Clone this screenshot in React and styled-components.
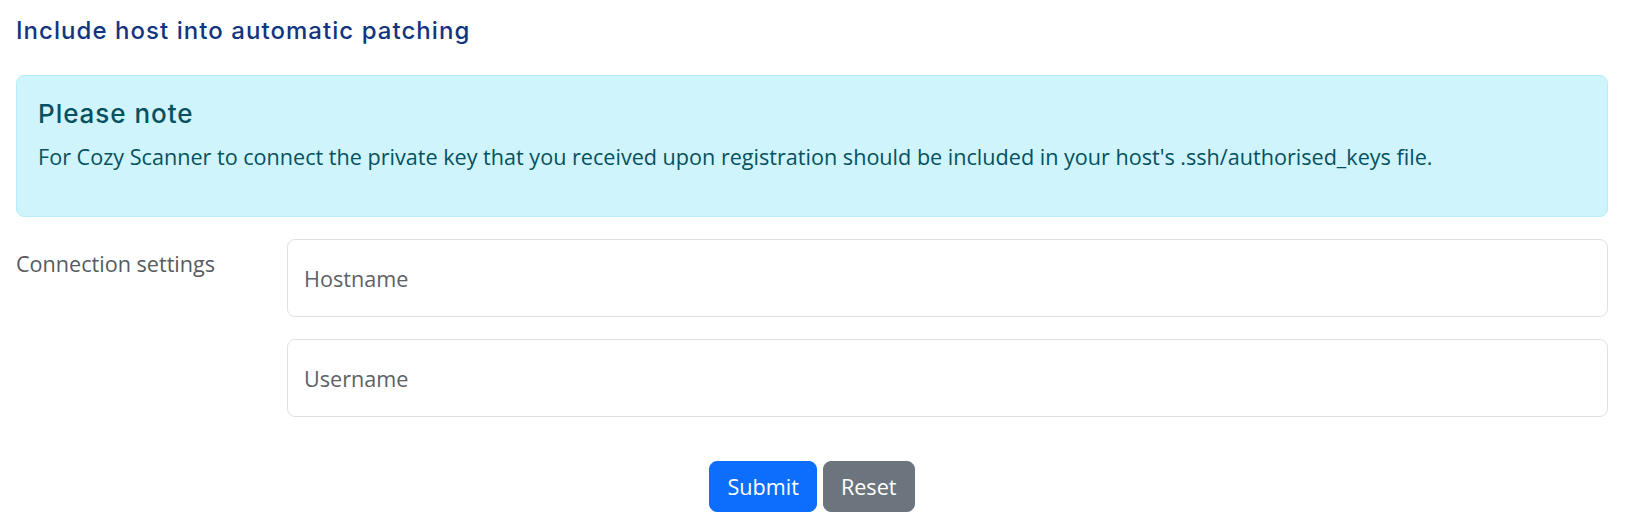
import React from "react";
import styled, { createGlobalStyle } from "styled-components";

const GlobalStyle = createGlobalStyle`
  * { box-sizing: border-box; }
  body {
    margin: 0;
    background: #fff;
    font-family: "Open Sans", "Noto Sans", sans-serif;
    color: #212529;
  }
`;

const Page = styled.main`
  padding: 0 19px 0 16px;
`;

/* 페이지 제목 */
const Title = styled.h2`
  margin: 0;
  padding-top: 17px;
  height: 75px;
  font-family: Inter, "Noto Sans", sans-serif;
  font-weight: 500;
  font-size: 24px;
  line-height: 28.8px;
  letter-spacing: 1.05px;
  color: #123580;
`;

/* 안내 박스 */
const Alert = styled.div`
  height: 142px;
  padding: 22px 21px;
  background: #cff4fc;
  border: 1px solid #b6effb;
  border-radius: 8px;
  color: #055160;
`;

const AlertTitle = styled.h4`
  margin: 0 0 12px;
  font-family: Inter, "Noto Sans", sans-serif;
  font-weight: 500;
  font-size: 26px;
  line-height: 31.2px;
  letter-spacing: 0.95px;
`;

const AlertText = styled.p`
  margin: 0;
  font-size: 21.6px;
  line-height: 32.4px;
`;

const Form = styled.form`
  padding-top: 22px;
`;

const Row = styled.div`
  display: grid;
  grid-template-columns: 271px 1fr;
`;

const Label = styled.label`
  padding-top: 9px;
  font-size: 21.6px;
  line-height: 32.4px;
  color: #555b60;
`;

const Fields = styled.div`
  display: flex;
  flex-direction: column;
  gap: 22px;
`;

const Input = styled.input`
  height: 78px;
  width: 100%;
  padding: 0 16px;
  border: 1px solid #dee2e6;
  border-radius: 8px;
  font-family: "Open Sans", sans-serif;
  font-size: 21.6px;
  color: #212529;
  background: #fff;
  outline: none;

  &::placeholder {
    color: #5d6166;
  }
`;

/* 하단 버튼 영역 */
const Actions = styled.div`
  display: flex;
  justify-content: center;
  gap: 6px;
  padding-top: 44px;
`;

const Button = styled.button`
  height: 51px;
  padding: 0 17px;
  border: 1px solid ${(p) => p.$bg};
  border-radius: 8px;
  background: ${(p) => p.$bg};
  color: #fff;
  font-family: "Open Sans", sans-serif;
  font-size: 21.6px;
  line-height: 1;
  cursor: pointer;
`;

export default function App() {
  return (
    <>
      <GlobalStyle />
      <Page>
        <Title>Include host into automatic patching</Title>
        <Alert>
          <AlertTitle>Please note</AlertTitle>
          <AlertText>
            For Cozy Scanner to connect the private key that you received upon
            registration should be included in your host's
            .ssh/authorised_keys file.
          </AlertText>
        </Alert>
        <Form onSubmit={(e) => e.preventDefault()}>
          <Row>
            <Label>Connection settings</Label>
            <Fields>
              <Input placeholder="Hostname" />
              <Input placeholder="Username" />
            </Fields>
          </Row>
          <Actions>
            <Button type="submit" $bg="#0d6efd">Submit</Button>
            <Button type="reset" $bg="#6c757d">Reset</Button>
          </Actions>
        </Form>
      </Page>
    </>
  );
}
